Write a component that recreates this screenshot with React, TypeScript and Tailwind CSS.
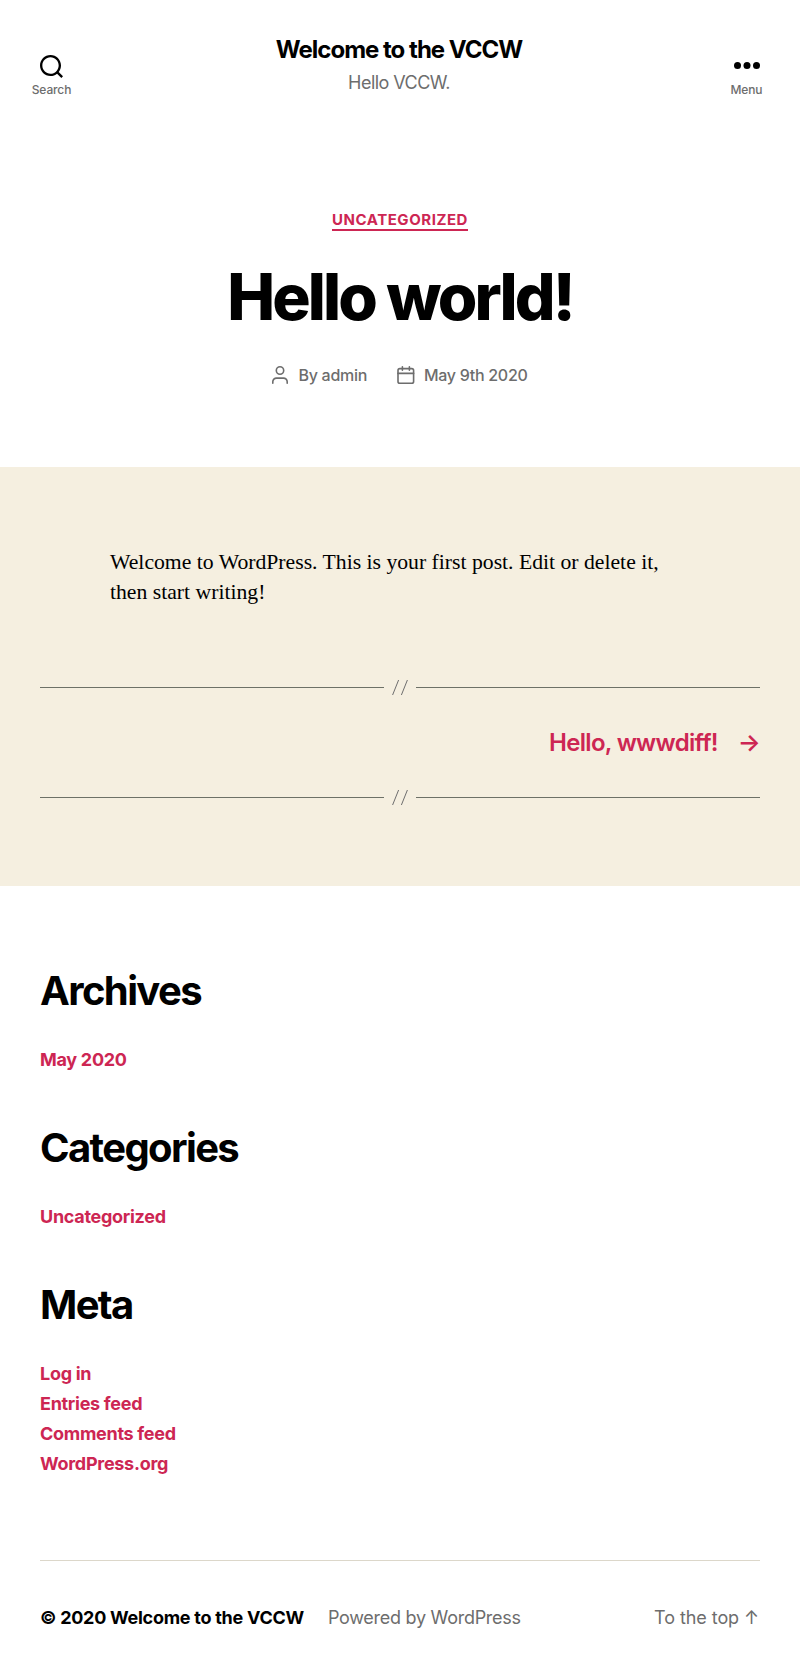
import React from "react";

function SearchIcon() {
  return (
    <svg width="23" height="23" viewBox="0 0 23 23" fill="none" aria-hidden="true">
      <path
        fill="#000"
        d="M38.710696,48.0601792 L43,52.3494831 L41.3494831,54 L37.0601792,49.710696 C35.2632422,51.1481185 32.9839107,52.0076499 30.5038249,52.0076499 C24.7027226,52.0076499 20,47.3049272 20,41.5038249 C20,35.7027226 24.7027226,31 30.5038249,31 C36.3049272,31 41.0076499,35.7027226 41.0076499,41.5038249 C41.0076499,43.9839107 40.1481185,46.2632422 38.710696,48.0601792 Z M36.3875844,47.1716785 C37.8030221,45.7026647 38.6734666,43.7048964 38.6734666,41.5038249 C38.6734666,36.9918565 35.0157934,33.3341833 30.5038249,33.3341833 C25.9918565,33.3341833 22.3341833,36.9918565 22.3341833,41.5038249 C22.3341833,46.0157934 25.9918565,49.6734666 30.5038249,49.6734666 C32.7048964,49.6734666 34.7026647,48.8030221 36.1716785,47.3875844 C36.2023931,47.347638 36.2360451,47.3092237 36.2726343,47.2726343 C36.3092237,47.2360451 36.347638,47.2023931 36.3875844,47.1716785 Z"
        transform="translate(-20 -31)"
      />
    </svg>
  );
}

function DotsIcon() {
  return (
    <svg width="26" height="7" viewBox="0 0 26 7" aria-hidden="true">
      <circle cx="3.5" cy="3.5" r="3.5" />
      <circle cx="13" cy="3.5" r="3.5" />
      <circle cx="22.5" cy="3.5" r="3.5" />
    </svg>
  );
}

function UserIcon() {
  return (
    <svg width="16" height="18" viewBox="0 0 16 18" fill="none" stroke="#6d6d6d" strokeWidth="1.6" strokeLinecap="round" aria-hidden="true">
      <circle cx="8" cy="4.5" r="3.7" />
      <path d="M.8 17.2v-1.4a3.7 3.7 0 0 1 3.7-3.7h7a3.7 3.7 0 0 1 3.7 3.7v1.4" />
    </svg>
  );
}

function CalendarIcon() {
  return (
    <svg width="18" height="18" viewBox="0 0 18 18" fill="none" stroke="#6d6d6d" strokeWidth="1.6" strokeLinecap="round" aria-hidden="true">
      <rect x="1" y="2.6" width="15.6" height="14.6" rx="1.8" />
      <path d="M5.4.8v3.4M12.4.8v3.4M1 7.4h15.6" />
    </svg>
  );
}

function Separator() {
  return (
    <div className="flex h-[17px] items-center gap-2">
      <div className="h-px w-[344px] bg-[#6d7167]" />
      <svg width="16" height="17" viewBox="0 0 16 17" stroke="#6d6d6d" strokeWidth="1" aria-hidden="true">
        <path d="M.6 16L6.6 1M9.4 16L15.4 1" />
      </svg>
      <div className="h-px flex-1 bg-[#6d7167]" />
    </div>
  );
}

function Widget({ title, links }: { title: string; links: string[] }) {
  return (
    <section>
      <h2 className="h-[50px] text-[40px] leading-[50px] font-bold tracking-[-0.0405em]">{title}</h2>
      <ul className="mt-[29px] text-[18px] leading-[30px] font-bold tracking-[-0.016em] text-[#cd2653]">
        {links.map((link) => (
          <li key={link}>
            <a href="#">{link}</a>
          </li>
        ))}
      </ul>
    </section>
  );
}

export default function App() {
  return (
    <div className="h-[1674px] w-[800px] overflow-hidden bg-white font-['Inter',sans-serif] whitespace-nowrap text-black antialiased">
      <header className="flex h-[147px] justify-between">
        <button className="mt-[55px] ml-[31px] flex h-[42px] w-[41px] flex-col items-center">
          <SearchIcon />
          <span className="mt-[4px] text-[12px] leading-[15px] font-medium tracking-[-0.01em] text-[#6d6d6d]">Search</span>
        </button>
        <div className="pt-[38px] text-center">
          <h1 className="text-[24px] leading-6 font-bold tracking-[-0.0415em]">Welcome to the VCCW</h1>
          <p className="mt-[7px] text-[18px] leading-[27px] font-normal tracking-[-0.03em] text-[#6d6d6d]">Hello VCCW.</p>
        </div>
        <button className="mt-[62px] mr-[33px] flex h-[36px] w-[41px] flex-col items-center">
          <DotsIcon />
          <span className="mt-[13px] text-[12px] leading-[15px] font-medium tracking-[-0.01em] text-[#6d6d6d]">Menu</span>
        </button>
      </header>

      <main>
        <div className="flex h-[320px] flex-col items-center pt-[64px]">
          <a href="#" className="h-[20px] border-b-2 border-[#cd2653] text-[15px] leading-[17px] font-bold tracking-[0.0366em] text-[#cd2653]">
            UNCATEGORIZED
          </a>
          <h2 className="mt-[31px] h-[70px] text-[64px] leading-[70px] font-extrabold tracking-[-0.045em]">Hello world!</h2>
          <div className="mt-[33px] flex h-[20px] text-[16px] leading-5 font-medium tracking-[-0.018em] text-[#6d6d6d]">
            <div className="flex items-center gap-[10px]">
              <UserIcon />
              <span>By admin</span>
            </div>
            <div className="ml-[30px] flex items-center gap-[9px]">
              <CalendarIcon />
              <span>May 9th 2020</span>
            </div>
          </div>
        </div>

        <div className="h-[419px] bg-[#f5efe0] px-10 pt-[80px]">
          <p className="ml-[70px] font-['Liberation_Serif',serif] text-[21.7px] leading-[30px]">
            Welcome to WordPress. This is your first post. Edit or delete it,
            <br />
            then start writing!
          </p>
          <nav className="mt-[72px]">
            <Separator />
            <div className="flex h-[93px] items-center justify-end text-[24px] leading-[28px] font-semibold tracking-[-0.029em] text-[#cd2653]">
              <a href="#" className="flex items-center gap-[20px]">
                <span>Hello, wwwdiff!</span>
                <span>→</span>
              </a>
            </div>
            <Separator />
          </nav>
        </div>
      </main>

      <aside className="flex h-[674px] flex-col gap-[48px] px-10 pt-[80px]">
        <Widget title="Archives" links={["May 2020"]} />
        <Widget title="Categories" links={["Uncategorized"]} />
        <Widget title="Meta" links={["Log in", "Entries feed", "Comments feed", "WordPress.org"]} />
      </aside>

      <footer className="mx-10 flex h-[114px] items-center border-t border-[#dcd7ca] text-[18px] leading-[27px] text-[#6d6d6d]">
        <p className="font-bold tracking-[-0.015em] text-black">© 2020 Welcome to the VCCW</p>
        <p className="ml-6 tracking-[-0.015em]">Powered by WordPress</p>
        <a href="#" className="mr-px ml-auto tracking-[-0.004em]">To the top ↑</a>
      </footer>
    </div>
  );
}
